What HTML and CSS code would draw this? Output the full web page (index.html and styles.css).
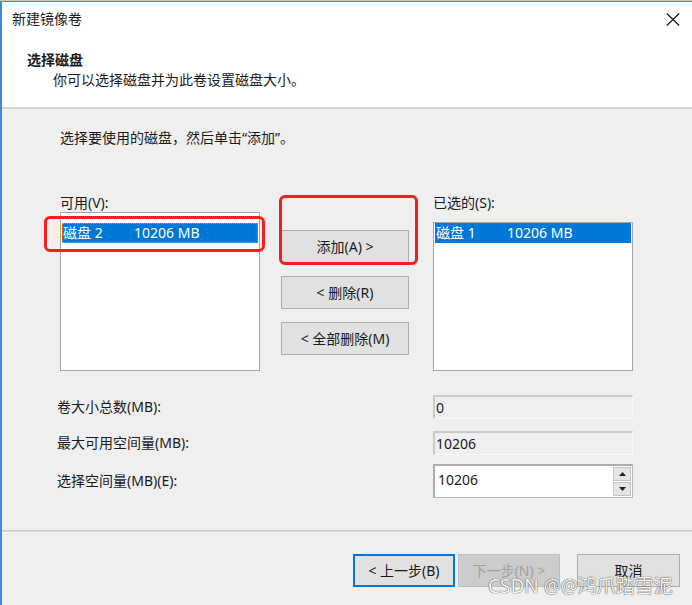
FILE: index.html
```html
<!DOCTYPE html>
<html lang="zh-CN">
<head>
<meta charset="utf-8">
<title>新建镜像卷</title>
<link rel="stylesheet" href="styles.css">
</head>
<body>
<div class="window">
  <div class="top">
    <div class="titlebar">
      <span class="title">新建镜像卷</span>
      <svg class="close" width="14" height="13" viewBox="0 0 14 13"><path d="M0.8 0.5L13.2 12.5M13.2 0.5L0.8 12.5" stroke="#111" stroke-width="1.1" fill="none"/></svg>
    </div>
    <div class="header">
      <div class="heading">选择磁盘</div>
      <div class="subheading">你可以选择磁盘并为此卷设置磁盘大小。</div>
    </div>
  </div>
  <div class="body">
    <p class="intro">选择要使用的磁盘，然后单击“添加”。</p>
    <div class="pickers">
      <div class="col col-left">
        <div class="label">可用(V):</div>
        <div class="list list-avail">
          <div class="item selected focused"><span class="disk">磁盘 2</span><span>10206 MB</span></div>
        </div>
        <div class="mark mark-left"></div>
      </div>
      <div class="col col-mid">
        <button class="btn">添加(A) &gt;</button>
        <button class="btn">&lt; 删除(R)</button>
        <button class="btn">&lt; 全部删除(M)</button>
        <div class="mark mark-mid"></div>
      </div>
      <div class="col col-right">
        <div class="label">已选的(S):</div>
        <div class="list list-sel">
          <div class="item selected"><span class="disk">磁盘 1</span><span>10206 MB</span></div>
        </div>
      </div>
    </div>
    <div class="fields">
      <div class="row row-1">
        <span class="flabel">卷大小总数(MB):</span>
        <div class="ro">0</div>
      </div>
      <div class="row row-2">
        <span class="flabel">最大可用空间量(MB):</span>
        <div class="ro">10206</div>
      </div>
      <div class="row row-3">
        <span class="flabel">选择空间量(MB)(E):</span>
        <div class="spin">
          <span class="spin-value">10206</span>
          <div class="spin-btns">
            <div class="spin-btn"><svg width="7" height="4" viewBox="0 0 7 4"><path d="M3.5 0L7 4H0Z" fill="#222"/></svg></div>
            <div class="spin-btn"><svg width="7" height="4" viewBox="0 0 7 4"><path d="M0 0H7L3.5 4Z" fill="#222"/></svg></div>
          </div>
        </div>
      </div>
    </div>
  </div>
  <div class="footer">
    <button class="btn fbtn focus">&lt; 上一步(B)</button>
    <button class="btn fbtn disabled">下一步(N) &gt;</button>
    <button class="btn fbtn cancel">取消</button>
  </div>
  <div class="watermark">CSDN @@鸿爪踏雪泥</div>
</div>
</body>
</html>
```
FILE: styles.css
```css
* { box-sizing: border-box; }
html, body {
  margin: 0;
  padding: 0;
  width: 692px;
  height: 605px;
  overflow: hidden;
  background: #c8c8c8;
}
body {
  font-family: "Noto Sans", "Noto Sans CJK SC", sans-serif;
  font-size: 14px;
  line-height: 20px;
  color: #1a1a1a;
}
.window {
  position: relative;
  margin-top: 1px;
  height: 604px;
  border-top: 1px solid #3f8ad8;
  border-left: 2px solid #3f8ad8;
  background: #efefef;
}
.top {
  background: #fff;
  border-bottom: 2px solid #d6d6d6;
}
.titlebar {
  height: 34px;
  display: flex;
  align-items: center;
  justify-content: space-between;
  padding: 0 12px 0 10px;
}
.title { font-size: 14px; }
.header {
  padding: 14px 0 17px 25px;
}
.heading { font-weight: bold; }
.subheading { margin-left: 26px; }
.body {
  padding: 19px 0 32px 58px;
}
.intro { margin: 0; }
.pickers {
  display: flex;
  margin-top: 45px;
}
.col { position: relative; }
.col-left { width: 200px; }
.col-mid {
  width: 128px;
  margin-left: 21px;
  padding-top: 37px;
  display: flex;
  flex-direction: column;
  gap: 13px;
}
.col-right { width: 200px; margin-left: 24px; }
.label { height: 19px; line-height: 20px; }
.list {
  background: #fff;
  border: 1px solid #a4a4a4;
  padding: 0 1px;
}
.list-avail { height: 159px; padding-top: 10px; }
.list-sel { height: 149px; margin-top: 10px; }
.item {
  display: flex;
  height: 20px;
  line-height: 20px;
  padding-left: 1px;
}
.item .disk { width: 71px; }
.selected { background: #0078d7; color: #fff; }
.focused { outline: 1px dotted #e39236; outline-offset: -1px; }
.btn {
  font-family: inherit;
  font-size: 14px;
  line-height: 20px;
  color: #1a1a1a;
  height: 33px;
  background: #e1e1e1;
  border: 1px solid #adadad;
  padding: 0;
  margin: 0;
}
.mark {
  position: absolute;
  border: 3px solid #f41e1e;
  border-radius: 6px;
}
.mark-left { left: -16px; top: 23px; width: 221px; height: 36px; }
.mark-mid { left: -2px; top: 2px; width: 139px; height: 70px; }
.fields {
  margin-top: 24px;
  margin-left: -3px;
}
.row { display: flex; align-items: center; }
.row-1, .row-2 { height: 24px; }
.row-2 { margin-top: 12px; }
.row-3 { height: 34px; margin-top: 9px; }
.flabel { width: 376px; }
.ro {
  width: 200px;
  height: 24px;
  line-height: 21px;
  padding-left: 1px;
  background: #efefef;
  border-top: 2px solid #c9c9c9;
  border-left: 2px solid #c9c9c9;
  border-right: 1px solid #f9f9f9;
  border-bottom: 1px solid #f9f9f9;
}
.spin {
  width: 200px;
  height: 34px;
  background: #fff;
  border: 1px solid #b8b8b8;
  border-top: 2px solid #acacac;
  border-left: 2px solid #acacac;
  display: flex;
  justify-content: space-between;
}
.spin-value { padding: 4px 0 0 3px; line-height: 20px; }
.spin-btns {
  width: 19px;
  display: flex;
  flex-direction: column;
  padding: 1px 1px 1px 0;
  gap: 1px;
}
.spin-btn {
  flex: 1;
  background: #e5e5e5;
  border: 1px solid #c4c4c4;
  display: flex;
  align-items: center;
  justify-content: center;
}
.footer {
  border-top: 2px solid #d0d0d0;
  box-shadow: inset 0 1px 0 #fbfbfb;
  padding: 22px 12px 0 0;
  display: flex;
  justify-content: flex-end;
}
.fbtn { width: 102px; }
.focus { border: 2px solid #0078d7; }
.disabled {
  margin-left: 3px;
  background: #cccccc;
  border-color: #bfbfbf;
  color: #a0a0a0;
}
.cancel { margin-left: 17px; width: 103px; }
.watermark {
  position: absolute;
  left: 486px;
  top: 572px;
  font-size: 19px;
  line-height: 24px;
  color: #f6f6f6;
  text-shadow: 0 0 1px #4a4a4a, 0 0 1px #4a4a4a;
  white-space: nowrap;
}
```
